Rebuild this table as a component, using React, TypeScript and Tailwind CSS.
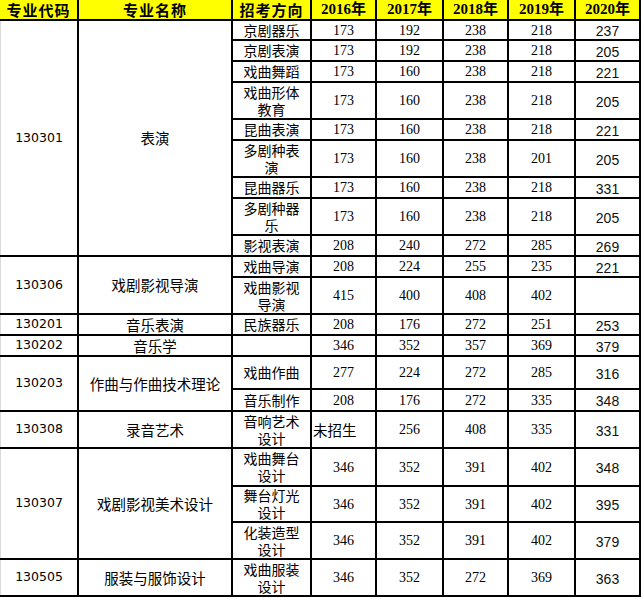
import React from "react";

type Row = {
  code?: string;
  name?: string;
  span?: number;
  dir: string[];
  v: string[];
  last: string;
};

const rows: Row[] = [
  { code: "130301", name: "表演", span: 9, dir: ["京剧器乐"], v: ["173", "192", "238", "218"], last: "237" },
  { dir: ["京剧表演"], v: ["173", "192", "238", "218"], last: "205" },
  { dir: ["戏曲舞蹈"], v: ["173", "160", "238", "218"], last: "221" },
  { dir: ["戏曲形体", "教育"], v: ["173", "160", "238", "218"], last: "205" },
  { dir: ["昆曲表演"], v: ["173", "160", "238", "218"], last: "221" },
  { dir: ["多剧种表", "演"], v: ["173", "160", "238", "201"], last: "205" },
  { dir: ["昆曲器乐"], v: ["173", "160", "238", "218"], last: "331" },
  { dir: ["多剧种器", "乐"], v: ["173", "160", "238", "218"], last: "205" },
  { dir: ["影视表演"], v: ["208", "240", "272", "285"], last: "269" },
  { code: "130306", name: "戏剧影视导演", span: 2, dir: ["戏曲导演"], v: ["208", "224", "255", "235"], last: "221" },
  { dir: ["戏曲影视", "导演"], v: ["415", "400", "408", "402"], last: "" },
  { code: "130201", name: "音乐表演", span: 1, dir: ["民族器乐"], v: ["208", "176", "272", "251"], last: "253" },
  { code: "130202", name: "音乐学", span: 1, dir: [], v: ["346", "352", "357", "369"], last: "379" },
  { code: "130203", name: "作曲与作曲技术理论", span: 2, dir: ["戏曲作曲"], v: ["277", "224", "272", "285"], last: "316" },
  { dir: ["音乐制作"], v: ["208", "176", "272", "335"], last: "348" },
  { code: "130308", name: "录音艺术", span: 1, dir: ["音响艺术", "设计"], v: ["未招生", "256", "408", "335"], last: "331" },
  { code: "130307", name: "戏剧影视美术设计", span: 3, dir: ["戏曲舞台", "设计"], v: ["346", "352", "391", "402"], last: "348" },
  { dir: ["舞台灯光", "设计"], v: ["346", "352", "391", "402"], last: "395" },
  { dir: ["化装造型", "设计"], v: ["346", "352", "391", "402"], last: "379" },
  { code: "130505", name: "服装与服饰设计", span: 1, dir: ["戏曲服装", "设计"], v: ["346", "352", "272", "369"], last: "363" },
];

const spanClass: Record<number, string> = {
  1: "row-span-1",
  2: "row-span-2",
  3: "row-span-3",
  9: "row-span-9",
};

const cjk = "font-['Noto_Sans_CJK_SC',sans-serif]";
const serif = "font-['Liberation_Serif','Noto_Sans_CJK_SC',serif]";

export default function App() {
  const cells: React.ReactNode[] = [];
  const head = ["专业代码", "专业名称", "招考方向"];
  head.forEach((h, i) => {
    cells.push(
      <div
        key={"h" + i}
        className={`bg-[#ffff00] flex items-center justify-center text-[15px] font-bold tracking-[1px] leading-none ${cjk}`}
      >
        {h}
      </div>
    );
  });
  ["2016", "2017", "2018", "2019", "2020"].forEach((y) => {
    cells.push(
      <div
        key={"y" + y}
        className={`bg-[#ffff00] flex items-center justify-center text-[15px] font-bold leading-none ${serif}`}
      >
        {y}年
      </div>
    );
  });

  rows.forEach((r, ri) => {
    if (r.code) {
      cells.push(
        <div
          key={"c" + ri}
          className={`bg-white border-l border-[#d9d9d9] flex items-center justify-center text-[12.5px] font-['DejaVu_Sans',sans-serif] ${spanClass[r.span || 1]}`}
        >
          {r.code}
        </div>
      );
      cells.push(
        <div
          key={"n" + ri}
          className={`bg-white flex items-center justify-center text-[14.5px] ${cjk} ${spanClass[r.span || 1]}`}
        >
          {r.name}
        </div>
      );
    }
    cells.push(
      <div
        key={"d" + ri}
        className={`bg-white flex flex-col items-center justify-center text-[14px] ${cjk}`}
      >
        {r.dir.map((t, i) => (
          <div key={i} className="h-[17px] leading-[17px] overflow-visible whitespace-nowrap">
            {t}
          </div>
        ))}
      </div>
    );
    r.v.forEach((val, vi) => {
      if (val === "未招生") {
        cells.push(
          <div
            key={"v" + ri + "-" + vi}
            className={`bg-white flex items-center justify-start pl-px text-[14.5px] ${cjk}`}
          >
            {val}
          </div>
        );
      } else {
        cells.push(
          <div
            key={"v" + ri + "-" + vi}
            className={`bg-white flex items-center justify-center text-[14px] ${serif}`}
          >
            {val}
          </div>
        );
      }
    });
    cells.push(
      <div
        key={"l" + ri}
        className="bg-white flex items-center justify-center pt-[3px] text-[14px] font-normal text-[#111] font-['Liberation_Sans',sans-serif]"
      >
        {r.last}
      </div>
    );
  });

  return (
    <div className="w-[641px] h-[597px] bg-white overflow-hidden">
      <div className="grid w-[641px] grid-cols-[77px_152px_77px_63px_65px_63px_65px_63px] grid-rows-[19px_18px_19px_19px_35px_19px_35px_19px_35px_19px_19px_35px_19px_19px_31px_20px_35px_36px_34px_35px_35px] gap-[2px] bg-black pr-[2px] pb-[2px] text-black">
        {cells}
      </div>
    </div>
  );
}
